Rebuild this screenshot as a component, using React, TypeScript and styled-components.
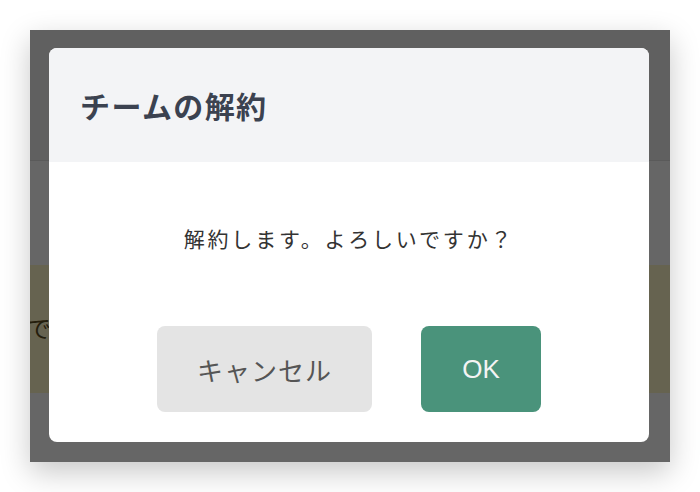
import React from 'react';
import styled, { createGlobalStyle } from 'styled-components';

const GlobalStyle = createGlobalStyle`
  html, body {
    margin: 0;
    padding: 0;
    background: #ffffff;
  }
  body {
    font-family: "Noto Sans CJK JP", "Noto Sans", sans-serif;
  }
`;

const Page = styled.div`
  width: 700px;
  height: 492px;
  padding: 30px;
  box-sizing: border-box;
`;

const Frame = styled.div`
  position: relative;
  width: 640px;
  height: 432px;
  overflow: hidden;
  box-shadow: 0 10px 28px rgba(0, 0, 0, 0.22);
  background: #ffffff;
  display: flex;
  flex-direction: column;
`;

const AppHeader = styled.div`
  height: 130px;
  background: #f0f0f0;
  border-bottom: 1px solid #e2e2e2;
`;

const Spacer = styled.div<{ $h: number }>`
  height: ${({ $h }) => $h}px;
`;

const Notice = styled.div`
  height: 128px;
  background: #fff7c8;
  color: #5a4c1e;
  display: flex;
  align-items: center;
  padding-bottom: 4px;
  box-sizing: border-box;
  font-size: 24px;
  text-indent: -3px;
  white-space: nowrap;
`;

const Overlay = styled.div`
  position: absolute;
  inset: 0;
  background: rgba(0, 0, 0, 0.6);
  display: flex;
  align-items: center;
  justify-content: center;
`;

const Dialog = styled.div`
  width: 600px;
  background: #ffffff;
  border-radius: 8px;
  overflow: hidden;
  margin-left: -2px;
  margin-top: -2px;
`;

const DialogHeader = styled.div`
  height: 114px;
  background: #f3f4f6;
  display: flex;
  align-items: center;
  padding: 0 31px;
  box-sizing: border-box;
`;

const Title = styled.h2`
  margin: 0;
  font-size: 30px;
  font-weight: 700;
  letter-spacing: 1.4px;
  color: #3b4250;
`;

const DialogBody = styled.div`
  display: flex;
  flex-direction: column;
  align-items: center;
  padding: 62px 0 30px;
`;

const Message = styled.p`
  margin: 0 0 74px;
  font-size: 21px;
  line-height: 28px;
  letter-spacing: 2.8px;
  color: #333333;
`;

const Actions = styled.div`
  display: flex;
  gap: 49px;
`;

const Button = styled.button<{ $primary?: boolean }>`
  width: ${({ $primary }) => ($primary ? 120 : 215)}px;
  height: 86px;
  border: none;
  border-radius: 8px;
  background: ${({ $primary }) => ($primary ? '#4a937b' : '#e4e4e4')};
  color: ${({ $primary }) => ($primary ? '#f4f4f4' : '#555555')};
  font-family: ${({ $primary }) =>
    $primary ? '"Liberation Sans", Arial, sans-serif' : '"Noto Sans CJK JP", sans-serif'};
  font-size: 26px;
  letter-spacing: ${({ $primary }) => ($primary ? 0 : 1)}px;
  cursor: pointer;
`;

export default function App() {
  return (
    <>
      <GlobalStyle />
      <Page>
        <Frame>
          <AppHeader />
          <Spacer $h={105} />
          <Notice>では、チームの解約手続きを行います。</Notice>
          <Spacer $h={69} />
          <Overlay>
            <Dialog>
              <DialogHeader>
                <Title>チームの解約</Title>
              </DialogHeader>
              <DialogBody>
                <Message>解約します。よろしいですか？</Message>
                <Actions>
                  <Button>キャンセル</Button>
                  <Button $primary>OK</Button>
                </Actions>
              </DialogBody>
            </Dialog>
          </Overlay>
        </Frame>
      </Page>
    </>
  );
}
